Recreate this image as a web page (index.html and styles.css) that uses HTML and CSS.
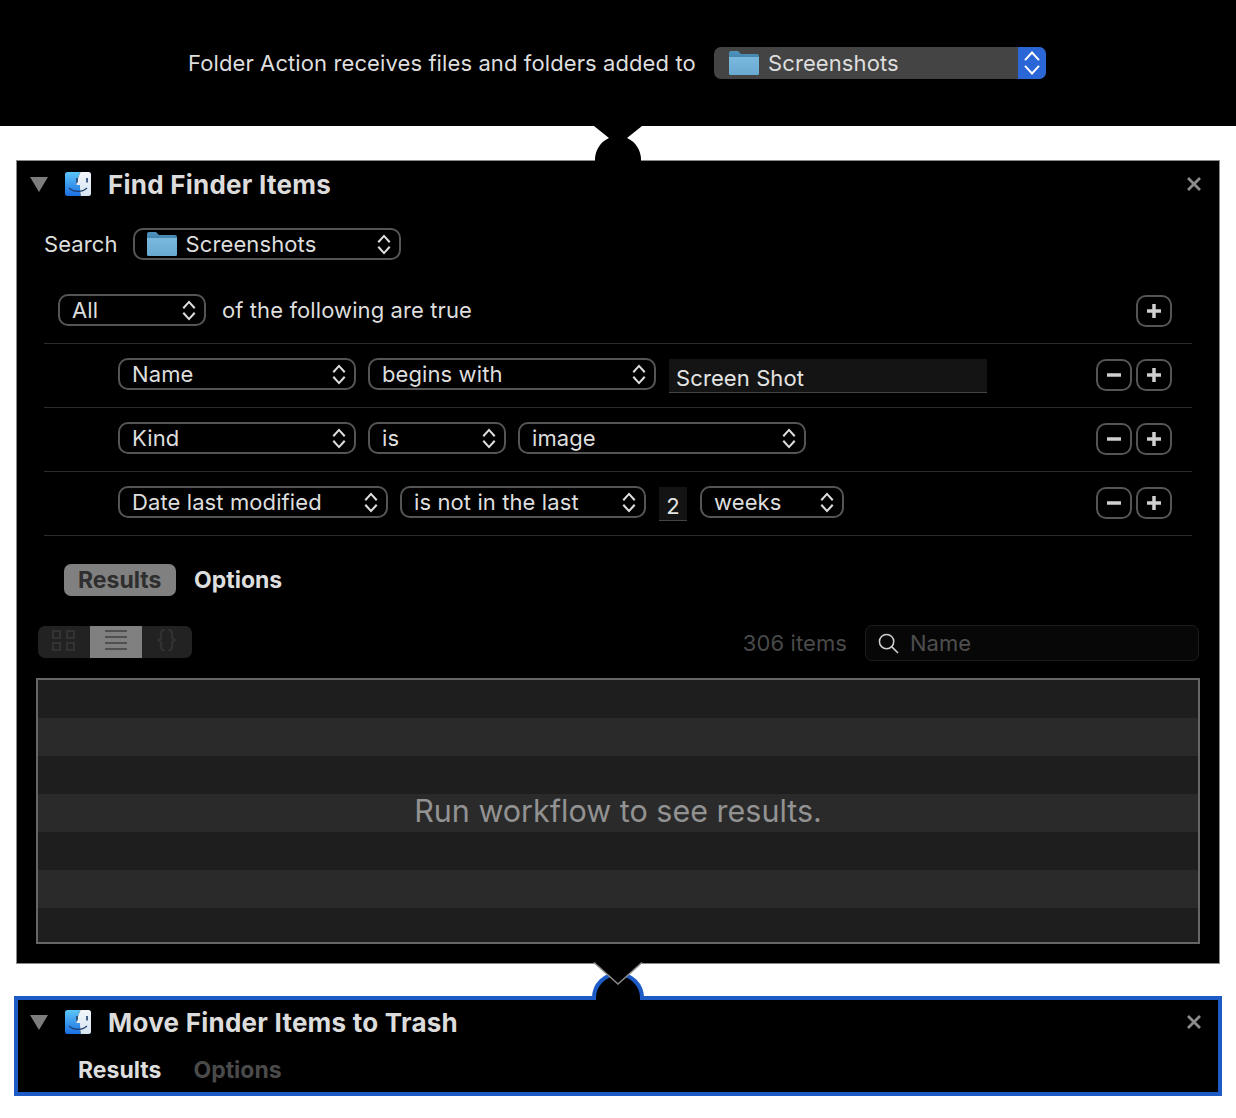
FILE: index.html
```html
<!DOCTYPE html>
<html lang="en">

<head>
    <meta charset="UTF-8">
    <meta name="viewport" content="width=device-width, initial-scale=1.0">
    <title>Folder Action</title>
    <link rel="stylesheet" href="styles.css">
</head>

<body>
    <svg class="defs" width="0" height="0">
        <defs>
            <linearGradient id="folderBack" x1="0" y1="0" x2="0" y2="1">
                <stop offset="0" stop-color="#4f94bd" />
                <stop offset="1" stop-color="#3f7fa8" />
            </linearGradient>
            <linearGradient id="folderFront" x1="0" y1="0" x2="0" y2="1">
                <stop offset="0" stop-color="#7ab9de" />
                <stop offset="1" stop-color="#68a9d2" />
            </linearGradient>
            <linearGradient id="finderBlue" x1="0" y1="0" x2="0" y2="1">
                <stop offset="0" stop-color="#5cc6f7" />
                <stop offset="1" stop-color="#1b6fe3" />
            </linearGradient>
            <linearGradient id="finderPale" x1="0" y1="0" x2="0" y2="1">
                <stop offset="0" stop-color="#f2f6fa" />
                <stop offset="1" stop-color="#d6e4f2" />
            </linearGradient>
            <symbol id="folder" viewBox="0 0 30 24">
                <path d="M0 2a2 2 0 0 1 2-2h7l3 3h16a2 2 0 0 1 2 2v4H0z" fill="url(#folderBack)" />
                <path d="M0 6h30v16.500a1.500 1.500 0 0 1-1.500 1.500h-27A1.500 1.500 0 0 1 0 22.500z" fill="url(#folderFront)" />
            </symbol>
            <symbol id="stepper" viewBox="0 0 14 20">
                <path d="M2 8l5-5.500L12 8M2 12l5 5.500L12 12" fill="none" stroke="currentColor" />
            </symbol>
            <symbol id="finder" viewBox="0 0 26 24">
                <path d="M2.500 0H15.500c-2 4.500-3.500 8.500-4.300 13h3.800c-.1 4 .2 7.500.8 11H2.500A2.500 2.500 0 0 1 0 21.500v-19A2.500 2.500 0 0 1 2.500 0z" fill="url(#finderBlue)" />
                <path d="M15.500 0h8A2.500 2.500 0 0 1 26 2.500v19a2.500 2.500 0 0 1-2.500 2.500h-7.700c-.6-3.500-.9-7-.8-11h-3.800C12 8.500 13.500 4.500 15.500 0z" fill="url(#finderPale)" />
                <path d="M12 6v4.500M22 6v4.500" stroke="#1c3f6e" stroke-width="1.600" fill="none" />
                <path d="M4 16c5 4.500 13 4.500 18 0" stroke="#1c3f6e" stroke-width="1.200" fill="none" />
            </symbol>
            <symbol id="close" viewBox="0 0 14 14">
                <path d="M1 1l12 12M13 1L1 13" stroke="currentColor" stroke-width="2.800" fill="none" />
            </symbol>
        </defs>
    </svg>

    <header class="top-bar">
        <span class="top-label">Folder Action receives files and folders added to</span>
        <div class="top-popup">
            <svg class="folder-icon"><use href="#folder" /></svg>
            <span class="top-popup-text">Screenshots</span>
            <span class="top-popup-arrows"><svg class="stepper"><use href="#stepper" /></svg></span>
        </div>
    </header>

    <section class="card card-find">
        <svg class="connector-top" viewBox="0 0 48 35">
            <path d="M0 0L15 12A23.500 23.500 0 0 0 1 34V35H47V34A23.500 23.500 0 0 0 33 12L48 0Z" fill="#000" />
        </svg>

        <div class="card-header">
            <span class="triangle"></span>
            <svg class="finder-icon"><use href="#finder" /></svg>
            <h2 class="card-title">Find Finder Items</h2>
            <svg class="close-icon"><use href="#close" /></svg>
        </div>

        <div class="search-row">
            <span class="text-label">Search</span>
            <div class="pill w-search">
                <svg class="folder-icon folder-small"><use href="#folder" /></svg>
                <span>Screenshots</span>
                <svg class="stepper"><use href="#stepper" /></svg>
            </div>
        </div>

        <div class="cond-row cond-head">
            <div class="pill w-all"><span>All</span><svg class="stepper"><use href="#stepper" /></svg></div>
            <span class="text-label following">of the following are true</span>
            <div class="row-buttons">
                <button class="square-btn">
                    <svg viewBox="0 0 16 16"><path d="M8 1v14M1 8h14" /></svg>
                </button>
            </div>
        </div>

        <div class="cond-row">
            <div class="pill w-name"><span>Name</span><svg class="stepper"><use href="#stepper" /></svg></div>
            <div class="pill w-begins"><span>begins with</span><svg class="stepper"><use href="#stepper" /></svg></div>
            <div class="field w-field">Screen Shot</div>
            <div class="row-buttons">
                <button class="square-btn"><svg viewBox="0 0 16 16"><path d="M1 8h14" /></svg></button>
                <button class="square-btn"><svg viewBox="0 0 16 16"><path d="M8 1v14M1 8h14" /></svg></button>
            </div>
        </div>

        <div class="cond-row">
            <div class="pill w-name"><span>Kind</span><svg class="stepper"><use href="#stepper" /></svg></div>
            <div class="pill w-is"><span>is</span><svg class="stepper"><use href="#stepper" /></svg></div>
            <div class="pill w-begins"><span>image</span><svg class="stepper"><use href="#stepper" /></svg></div>
            <div class="row-buttons">
                <button class="square-btn"><svg viewBox="0 0 16 16"><path d="M1 8h14" /></svg></button>
                <button class="square-btn"><svg viewBox="0 0 16 16"><path d="M8 1v14M1 8h14" /></svg></button>
            </div>
        </div>

        <div class="cond-row">
            <div class="pill w-date"><span>Date last modified</span><svg class="stepper"><use href="#stepper" /></svg></div>
            <div class="pill w-notin"><span>is not in the last</span><svg class="stepper"><use href="#stepper" /></svg></div>
            <div class="field w-num">2</div>
            <div class="pill w-weeks"><span>weeks</span><svg class="stepper"><use href="#stepper" /></svg></div>
            <div class="row-buttons">
                <button class="square-btn"><svg viewBox="0 0 16 16"><path d="M1 8h14" /></svg></button>
                <button class="square-btn"><svg viewBox="0 0 16 16"><path d="M8 1v14M1 8h14" /></svg></button>
            </div>
        </div>

        <div class="tabs">
            <span class="tab tab-selected">Results</span>
            <span class="tab">Options</span>
        </div>

        <div class="toolbar">
            <div class="segmented">
                <span class="seg seg-wide">
                    <svg class="seg-icon" viewBox="0 0 24 24">
                        <rect x="1" y="1" width="7" height="7" />
                        <rect x="15" y="1" width="7" height="7" />
                        <rect x="1" y="13" width="7" height="7" />
                        <rect x="15" y="13" width="7" height="7" />
                    </svg>
                </span>
                <span class="seg seg-wide seg-on">
                    <svg class="seg-icon" viewBox="0 0 24 24">
                        <path d="M1 1h22M1 7h22M1 13h22M1 19h22" />
                    </svg>
                </span>
                <span class="seg seg-braces">{}</span>
            </div>
            <span class="item-count">306 items</span>
            <div class="search-field">
                <svg class="search-icon" viewBox="0 0 22 22">
                    <circle cx="9" cy="9" r="7.500" />
                    <path d="M14.500 14.500L21 21" />
                </svg>
                <span>Name</span>
            </div>
        </div>

        <div class="results">
            <div class="stripe"></div>
            <div class="stripe stripe-alt"></div>
            <div class="stripe"></div>
            <div class="stripe stripe-alt"></div>
            <div class="stripe"></div>
            <div class="stripe stripe-alt"></div>
            <div class="stripe"></div>
            <div class="results-msg">Run workflow to see results.</div>
        </div>
    </section>

    <section class="card card-move">
        <svg class="connector-bottom" viewBox="0 0 56 40">
            <path class="arc" d="M4 38V36A24 24 0 0 1 52 36V38" />
            <path class="notch" d="M4 .5L28 22L52 .5" />
        </svg>

        <div class="card-header">
            <span class="triangle"></span>
            <svg class="finder-icon"><use href="#finder" /></svg>
            <h2 class="card-title">Move Finder Items to Trash</h2>
            <svg class="close-icon"><use href="#close" /></svg>
        </div>
        <div class="tabs">
            <span class="tab">Results</span>
            <span class="tab tab-dim">Options</span>
        </div>
    </section>
</body>

</html>
```

FILE: styles.css
```css
* {
    box-sizing: border-box;
}

body {
    margin: 0;
    background-color: white;
    color: #dedede;
    font-family: Inter, "Liberation Sans", sans-serif;
    font-size: 22px;
    letter-spacing: 0.1px;
}

.defs {
    position: absolute;
}

.top-bar {
    height: 126px;
    background-color: black;
    display: flex;
    align-items: center;
    padding-left: 188px;
}

.top-label {
    width: 526px;
}

.top-popup {
    width: 332px;
    height: 32px;
    background-color: #444;
    border-radius: 7px;
    display: flex;
    align-items: center;
    padding-left: 15px;
    overflow: hidden;
}

.top-popup-text {
    margin-left: 9px;
}

.top-popup-arrows {
    margin-left: auto;
    width: 28px;
    height: 32px;
    background-color: #2b66d6;
    color: white;
    display: flex;
    align-items: center;
    justify-content: center;
}

.top-popup-arrows .stepper {
    width: 20px;
    height: 28px;
    stroke-width: 1.4;
}

.folder-icon {
    width: 30px;
    height: 24px;
    flex-shrink: 0;
}

.stepper {
    width: 16px;
    height: 23px;
    flex-shrink: 0;
    stroke-width: 1.8;
}

.card {
    position: relative;
    background-color: black;
}

.card-find {
    margin: 34px 16px 0;
    border: 1px solid #8a8a8a;
    padding-bottom: 19px;
}

.card-move {
    margin: 32px 14px 0;
    height: 100px;
    border: 4px solid #1d5bc6;
}

.connector-top {
    position: absolute;
    top: -35px;
    left: 50%;
    margin-left: -24px;
    width: 48px;
    height: 35px;
}

.connector-bottom {
    position: absolute;
    top: -38px;
    left: 50%;
    margin-left: -28px;
    width: 56px;
    height: 40px;
}

.connector-bottom .arc {
    fill: black;
    stroke: #1d5bc6;
    stroke-width: 4;
}

.connector-bottom .notch {
    fill: black;
    stroke: #8a8a8a;
    stroke-width: 1.5;
}

.card-header {
    height: 48px;
    display: flex;
    align-items: center;
    padding: 0 18px 2px 13px;
}

.card-move .card-header {
    height: 46px;
    padding: 0 17px 2px 12px;
}

.triangle {
    width: 0;
    height: 0;
    border-left: 9px solid transparent;
    border-right: 9px solid transparent;
    border-top: 15px solid #7d7d7d;
}

.finder-icon {
    width: 26px;
    height: 24px;
    margin-left: 17px;
}

.card-title {
    margin: 0 0 0 17px;
    font-size: 26px;
    font-weight: 700;
    letter-spacing: 0.24px;
    color: #dcdcdc;
}

.close-icon {
    width: 14px;
    height: 14px;
    margin-left: auto;
    color: #8c8c8c;
}

.search-row {
    display: flex;
    align-items: center;
    margin-top: 19px;
    padding-left: 27px;
    gap: 15px;
    height: 32px;
}

.pill {
    height: 32px;
    border: 2px solid #555;
    border-radius: 10px;
    display: flex;
    align-items: center;
    justify-content: space-between;
    padding: 0 7px 0 12px;
    flex-shrink: 0;
}

.w-search { width: 268px; justify-content: flex-start; padding-left: 12px; }
.w-search .stepper { margin-left: auto; }
.w-search .folder-small { margin-right: 9px; }
.w-all { width: 148px; }
.w-name { width: 238px; }
.w-begins { width: 288px; }
.w-is { width: 138px; }
.w-date { width: 270px; }
.w-notin { width: 246px; }
.w-weeks { width: 144px; }

.cond-row {
    height: 64px;
    margin: 0 27px;
    padding: 14px 20px 0 74px;
    border-bottom: 1px solid #2b2b2b;
    display: flex;
    align-items: flex-start;
    gap: 12px;
}

.cond-head {
    margin-top: 20px;
    padding-left: 14px;
    gap: 16px;
}

.following {
    line-height: 32px;
}

.row-buttons {
    margin-left: auto;
    margin-top: 1px;
    display: flex;
    gap: 4px;
}

.square-btn {
    width: 36px;
    height: 32px;
    padding: 0;
    background-color: black;
    border: 2px solid #555;
    border-radius: 10px;
    display: flex;
    align-items: center;
    justify-content: center;
}

.square-btn svg {
    width: 16px;
    height: 16px;
}

.square-btn path {
    stroke: #cfcfcf;
    stroke-width: 3.5;
    fill: none;
}

.field {
    height: 34px;
    margin-top: 1px;
    background-color: #141414;
    border-bottom: 1px solid #444;
    padding: 5px 0 0 7px;
    line-height: 29px;
    color: #e4e4e4;
    flex-shrink: 0;
}

.w-field {
    width: 318px;
    margin-left: 1px;
}

.w-num {
    width: 28px;
    padding: 5px 0 0;
    text-align: center;
    margin-left: 1px;
    margin-right: 1px;
}

.tabs {
    display: flex;
    gap: 4px;
    margin-top: 28px;
    padding-left: 47px;
    font-size: 23px;
    font-weight: 700;
    letter-spacing: 0;
}

.card-move .tabs {
    margin-top: 8px;
    padding-left: 46px;
}

.tab {
    height: 32px;
    line-height: 32px;
    padding: 0 14px;
    border-radius: 7px;
}

.tab-selected {
    width: 112px;
    background-color: #808080;
    color: #2e2e2e;
}

.tab-dim {
    color: #4a4a4a;
}

.toolbar {
    display: flex;
    align-items: center;
    height: 36px;
    margin-top: 29px;
    padding: 0 20px 0 21px;
}

.segmented {
    display: flex;
    width: 154px;
    height: 32px;
    margin-bottom: 2px;
    background-color: #222;
    border-radius: 7px;
    overflow: hidden;
}

.seg {
    flex: 1;
    display: flex;
    align-items: center;
    justify-content: center;
}

.seg-wide {
    flex: none;
    width: 52px;
}

.seg-on {
    background-color: #808080;
}

.seg-icon {
    width: 24px;
    height: 24px;
    fill: none;
    stroke: #333;
    stroke-width: 2;
}

.seg-on .seg-icon {
    stroke: #505050;
}

.seg-braces {
    color: #333;
    font-size: 24px;
    padding-bottom: 6px;
    letter-spacing: 1px;
}

.item-count {
    margin-left: auto;
    margin-right: 18px;
    color: #4a4a4a;
}

.search-field {
    width: 334px;
    height: 36px;
    background-color: #070707;
    border: 1px solid #1c1c1c;
    border-radius: 7px;
    display: flex;
    align-items: center;
    padding-left: 12px;
    color: #4e4e4e;
    gap: 11px;
    letter-spacing: 0;
}

.search-icon {
    width: 21px;
    height: 21px;
    fill: none;
    stroke: #d0d0d0;
    stroke-width: 1.600;
}

.results {
    position: relative;
    height: 266px;
    margin: 17px 19px 0;
    border: 2px solid #666;
    overflow: hidden;
}

.stripe {
    height: 38px;
    background-color: #1e1e1e;
}

.stripe-alt {
    background-color: #2a2a2a;
}

.results-msg {
    position: absolute;
    top: 0;
    left: 0;
    right: 0;
    bottom: 2px;
    display: flex;
    align-items: center;
    justify-content: center;
    font-size: 30.5px;
    letter-spacing: 0;
    color: #929292;
}
```
